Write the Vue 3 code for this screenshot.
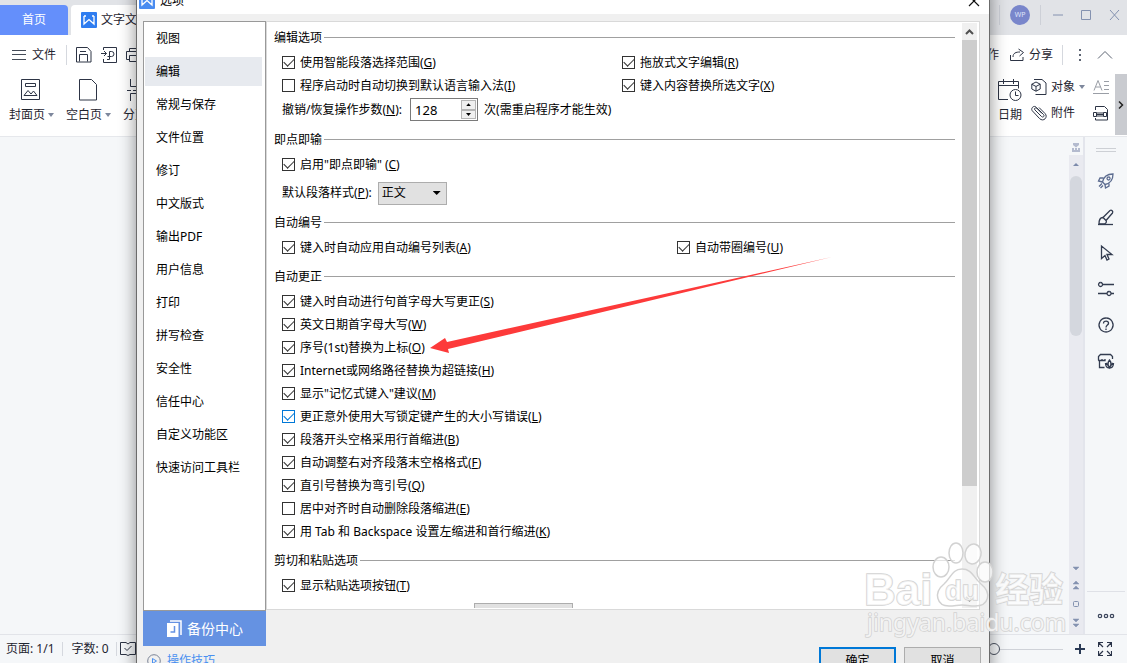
<template>
  <div class="app">
    <!-- 标签栏 -->
    <div class="tab-bar">
      <button class="tab home-tab">首页</button>
      <button class="tab doc-tab">
        <svg width="16" height="16" viewBox="0 0 16 16">
          <rect width="16" height="16" rx="1" fill="#2f7df0" />
          <path d="M3 4v8l5-4.500 5 4.500V4M3 4h2M11 4h2" fill="none" stroke="#fff" stroke-width="1.300" />
        </svg>
        <span>文字文稿1</span>
      </button>
      <div class="window-tools">
        <i class="split"></i>
        <span class="avatar">WP</span>
        <i class="split"></i>
        <svg class="win-icons" width="68" height="14" viewBox="0 0 68 14">
          <path d="M0 7h10M28.500 2.500h9v9h-9zM57 2l9 10M66 2l-9 10" fill="none" stroke="#8492b0" />
        </svg>
      </div>
    </div>

    <!-- 工具栏 -->
    <div class="toolbar">
      <div class="tool-left">
        <div class="quick-row">
          <button class="file-btn">
            <svg width="14" height="12" viewBox="0 0 14 12"><path d="M0 1.500h14M0 5.500h14M0 10.500h14" stroke="#444b57" /></svg>
            <span>文件</span>
          </button>
          <i class="split"></i>
          <svg class="line-icon" width="16" height="16" viewBox="0 0 16 16">
            <path d="M.5 .5h11l3.500 4v10.500H.5zM3.500 14.500V7.500h8v7M4 4.500h6" />
          </svg>
          <svg class="line-icon" width="16" height="16" viewBox="0 0 16 16">
            <path d="M2.500 3V.5h13v15h-13V12M0 6.500h5.500M3 4l2.500 2.500L3 9M6 12.500h2.500V4.500h2a2.500 2.500 0 0 1 0 5H6.500" />
          </svg>
          <svg class="line-icon" width="16" height="16" viewBox="0 0 16 16">
            <path d="M3.500 4V1.500h9V4M3 12.500H.5v-8h15v8H13M3.500 8.500h9v6h-9z" />
          </svg>
        </div>
        <div class="ribbon-row">
          <button class="big-btn">
            <svg class="line-icon" width="20" height="22" viewBox="0 0 20 22">
              <path d="M.5 .5h18v20H.5zM4.500 4.500h10v3h-10zM3 16.500h13l-3.500-4.500-2.500 3-3-3.500z" />
            </svg>
            <span class="caption">封面页<i class="caret"></i></span>
          </button>
          <button class="big-btn">
            <svg class="line-icon" width="20" height="22" viewBox="0 0 20 22">
              <path d="M1.500 .5h12l5 5v15.500h-17z" />
            </svg>
            <span class="caption">空白页<i class="caret"></i></span>
          </button>
          <button class="big-btn page-break">
            <svg class="line-icon" width="20" height="22" viewBox="0 0 20 22">
              <path d="M3.500 0v7.500h13V0M3.500 22v-7.500h13V22M0 11.500h4M6 11.500h3M11 11.500h3M16 11.500h4" />
            </svg>
            <span class="caption">分页<i class="caret"></i></span>
          </button>
        </div>
      </div>

      <div class="tool-right">
        <div class="quick-row">
          <span class="collab">协作</span>
          <button class="share-btn">
            <svg class="line-icon" width="15" height="14" viewBox="0 0 15 14">
              <path d="M.5 7v5.500h12.500V9M3 9c0-4 3-5 7-5M8.500 1l5 3.500-4 3.500" />
            </svg>
            <span>分享</span>
          </button>
          <i class="split"></i>
          <svg class="more" width="4" height="14" viewBox="0 0 4 14">
            <path d="M1 1h2v2H1zM1 6h2v2H1zM1 11h2v2H1z" fill="#5d6573" />
          </svg>
          <svg class="fold" width="16" height="8" viewBox="0 0 16 8"><path d="M1 7.500l7-7 7 7" fill="none" stroke="#5d6573" /></svg>
        </div>
        <div class="ribbon-row">
          <button class="big-btn date-btn">
            <svg class="line-icon" width="24" height="22" viewBox="0 0 24 22">
              <path d="M10 20.500H.5v-18h20v7M1 6.500h19M5.500 0v5M15.500 0v5" />
              <circle cx="17.500" cy="16" r="5.500" />
              <path d="M17.500 12.500v4h3" />
            </svg>
            <span class="caption">日期</span>
          </button>
          <div class="small-col">
            <button class="small-btn">
              <svg class="line-icon" width="16" height="16" viewBox="0 0 16 16">
                <path d="M3 .5h8l4 3.500v11.500H4.500M5 3L.8 5.200v4.800L5 12.200l4.200-2.200V5.200zM.8 5.200L5 7.500l4.200-2.300M5 7.500v4.700" />
              </svg>
              <span>对象</span><i class="caret"></i>
            </button>
            <button class="small-btn">
              <svg class="line-icon" width="16" height="16" viewBox="0 0 16 16">
                <path d="M4 5l6.500 6.500c1.500 1.500 3.500-.5 2-2L5.500 2.500C3-.5-1 3.500 1.500 6l7 7.500c4 4 9-1.500 5.500-5L8 2.500M4 5c-1.500-1.500.5-3 2-1.500l5 5" />
              </svg>
              <span>附件</span>
            </button>
          </div>
          <div class="small-col icon-col">
            <svg width="16" height="16" viewBox="0 0 16 16">
              <path d="M1 11.500L5 1.500l4 10M2.500 8h5M11 2.500h5M11 6.500h5M11 10.500h5M0 14.500h16" fill="none" stroke="#9a9ea6" />
            </svg>
            <svg class="line-icon" width="16" height="16" viewBox="0 0 16 16">
              <path d="M2.500 5V1.500h9l3 3v10.500h-12V13M.5 7.500h3v4h-3zM10.500 7.500h3v4h-3zM3.500 9.500h7M3.500 8h7M3.500 11h7" />
            </svg>
          </div>
          <button class="expand" aria-label="更多工具">
            <svg width="6" height="10" viewBox="0 0 6 10"><path d="M1 1.500L4.500 5 1 8.500" fill="none" stroke="#222" stroke-width="1.500" /></svg>
          </button>
        </div>
      </div>
    </div>

    <!-- 文档区 -->
    <div class="workspace">
      <div class="canvas"></div>
      <div class="doc-scroll">
        <svg class="ruler-icon" width="14" height="18" viewBox="0 0 14 18">
          <path d="M4 6h6v2L7 10.500 4 8zM3 11h2v2h1v-2h2v2h1v-2h2v4H3z" fill="#b4bbcf" />
        </svg>
        <div class="doc-track">
          <svg width="14" height="20" viewBox="0 0 14 20"><path d="M4 11l3-3 3 3z" fill="#7c8aab" /></svg>
          <div class="doc-thumb"></div>
          <svg class="doc-nav" width="14" height="72" viewBox="0 0 14 72">
            <path d="M4 5h6L7 8zM4 22l3-3 3 3zM4 27l3-3 3 3zM4 57h6l-3 3zM4 62h6l-3 3z" fill="#8492b0" stroke="#8492b0" stroke-width=".5" />
            <rect x="4.500" y="39.500" width="5" height="5" rx="1" fill="none" stroke="#8492b0" />
          </svg>
        </div>
      </div>
      <div class="side-bar">
        <i class="handle"></i>
        <button v-for="icon in sideIcons" :key="icon.name" class="side-btn" :aria-label="icon.name">
          <svg width="18" height="18" viewBox="0 0 18 18" fill="none" :stroke="icon.color" stroke-width="1.300">
            <path v-for="d in icon.paths" :key="d" :d="d" />
          </svg>
        </button>
        <div class="side-more">
          <svg width="18" height="6" viewBox="0 0 18 6" fill="none" stroke="#3b455c" stroke-width="1.200">
            <circle cx="3" cy="3" r="1.700" /><circle cx="9" cy="3" r="1.700" /><circle cx="15" cy="3" r="1.700" />
          </svg>
        </div>
      </div>
    </div>

    <!-- 状态栏 -->
    <div class="status-bar">
      <span>页面: 1/1</span>
      <i class="split"></i>
      <span>字数: 0</span>
      <i class="split"></i>
      <svg class="line-icon" width="16" height="14" viewBox="0 0 16 14">
        <path d="M6 .5H.5v12H6l2 1 2-1h5.500V.5H10L8 2 6 .5M4.500 6l2.500 2.500L11.500 4" />
      </svg>
      <div class="zoom-area">
        <input v-model="zoom" type="range" min="0" max="100" aria-label="缩放" />
        <svg width="10" height="10" viewBox="0 0 10 10"><path d="M5 0v10M0 5h10" stroke="#2a3a55" stroke-width="2" /></svg>
        <svg class="full" width="14" height="14" viewBox="0 0 14 14">
          <path d="M5 .5H.5V5M.5 .5L5 5M9 .5h4.500V5M13.500 .5L9 5M5 13.500H.5V9M.5 13.500L5 9M9 13.500h4.500V9M13.500 13.500L9 9" fill="none" stroke="#2a3348" stroke-width="1.200" />
        </svg>
      </div>
    </div>

    <!-- 选项对话框 -->
    <div class="dialog" role="dialog" aria-label="选项">
      <div class="dialog-title">
        <svg width="16" height="16" viewBox="0 0 16 16">
          <rect width="16" height="16" rx="1" fill="#4a8cf0" />
          <path d="M3 4v8l5-4.500 5 4.500V4M3 4h2M11 4h2" fill="none" stroke="#fff" stroke-width="1.300" />
        </svg>
        <span>选项</span>
        <button class="close-btn" aria-label="关闭">
          <svg width="12" height="12" viewBox="0 0 12 12"><path d="M1 1l10 10M11 1L1 11" stroke="#111" stroke-width="1.200" /></svg>
        </button>
      </div>

      <div class="dialog-body">
        <div class="left-col">
          <div class="menu">
            <button
              v-for="name in menus"
              :key="name"
              class="menu-item"
              :class="{ active: name === current }"
              @click="current = name"
            >{{ name }}</button>
          </div>
          <button class="backup-btn">
            <svg width="16" height="18" viewBox="0 0 16 18">
              <path d="M4 1h11v14" fill="none" stroke="#fff" stroke-width="1.500" />
              <path d="M1 3h11.500v14H1z" fill="#fff" />
              <path d="M8.500 6v6H4.500" fill="none" stroke="#6592e2" stroke-width="1.500" />
            </svg>
            <span>备份中心</span>
          </button>
        </div>

        <div class="panel">
          <div class="panel-content">
            <section v-for="group in groups" :key="group.title" class="group">
              <h3 class="group-title"><span>{{ group.title }}</span></h3>
              <div v-for="(row, i) in group.rows" :key="i" class="row" :class="group.layout">
                <label v-for="item in row" :key="item.key" class="check" :class="{ focus: item.focus }">
                  <input v-model="item.checked" type="checkbox" />
                  <span>{{ item.text }}(<u>{{ item.key }}</u>)</span>
                </label>
              </div>

              <div v-if="group.extra === 'undo'" class="field-row undo-row">
                <label for="undo-steps">撤销/恢复操作步数(<u>N</u>):</label>
                <div class="spinner">
                  <input id="undo-steps" v-model.number="steps" type="text" />
                  <div class="spin-btns">
                    <button aria-label="增加" @click="steps++"></button>
                    <button class="down" aria-label="减少" @click="steps--"></button>
                  </div>
                </div>
                <span>次(需重启程序才能生效)</span>
              </div>
              <div v-if="group.extra === 'style'" class="field-row style-row">
                <label for="para-style">默认段落样式(<u>P</u>):</label>
                <div class="select-box">
                  <select id="para-style">
                    <option>正文</option>
                  </select>
                </div>
              </div>
              <div v-if="group.extra === 'paste'" class="field-row paste-row">
                <div class="select-box wide">
                  <select aria-label="粘贴方式"></select>
                </div>
              </div>
            </section>
          </div>
          <div class="scrollbar">
            <svg width="15" height="17" viewBox="0 0 15 17"><path d="M4 11l3.500-3.500L11 11" fill="none" stroke="#505050" stroke-width="2" /></svg>
            <div class="track"><div class="thumb"></div></div>
            <svg width="15" height="17" viewBox="0 0 15 17"><path d="M4 6l3.500 3.500L11 6" fill="none" stroke="#505050" stroke-width="2" /></svg>
          </div>
        </div>
      </div>

      <div class="dialog-footer">
        <a href="#" class="tips">
          <svg width="14" height="14" viewBox="0 0 14 14" fill="none">
            <circle cx="7" cy="7" r="6.300" stroke="#7b8496" />
            <path d="M5.500 4.500l4 2.500-4 2.500z" stroke="#4a90f0" />
          </svg>
          <span>操作技巧</span>
        </a>
        <button class="btn primary">确定</button>
        <button class="btn">取消</button>
      </div>
    </div>

    <!-- 标注箭头 -->
    <svg class="arrow" width="404" height="98" viewBox="0 0 404 98">
      <path d="M0 92L15 82 17 86 402 1 18 93 19 97z" fill="#fd3a3a" />
    </svg>

    <!-- 水印 -->
    <svg class="watermark" width="210" height="104" viewBox="0 0 210 104">
      <g fill="#fff" fill-opacity="0.700" stroke="#d2d2d2" stroke-width="1.500">
        <ellipse cx="78" cy="30" rx="8" ry="10" />
        <ellipse cx="93" cy="16" rx="7" ry="10" />
        <ellipse cx="110" cy="17" rx="8" ry="10" transform="rotate(12 110 17)" />
        <ellipse cx="122" cy="35" rx="8" ry="10" />
        <path fill-opacity="0.400" d="M99 32c-10 0-11 9-18 15-11 9-7 22 5 22 5 0 9-1 13-1s8 1 13 1c14 0 17-13 6-22-8-7-9-15-19-15z" />
        <text class="wm-latin" x="1" y="68">Bai</text>
        <text class="wm-du" x="82" y="63">du</text>
        <text class="wm-cjk" x="132" y="65">经验</text>
        <text class="wm-url" x="4" y="94">jingyan.baidu.com</text>
      </g>
    </svg>
  </div>
</template>

<script setup>
import { ref, reactive } from 'vue'

const current = ref('编辑')
const steps = ref(128)
const zoom = ref(0)

const menus = [
  '视图', '编辑', '常规与保存', '文件位置', '修订', '中文版式', '输出PDF',
  '用户信息', '打印', '拼写检查', '安全性', '信任中心', '自定义功能区', '快速访问工具栏'
]

// 复选框条目
const check = (text, key, checked = true, focus = false) => ({ text, key, checked, focus })

const groups = reactive([
  {
    title: '编辑选项',
    layout: 'half',
    extra: 'undo',
    rows: [
      [check('使用智能段落选择范围', 'G'), check('拖放式文字编辑', 'R')],
      [check('程序启动时自动切换到默认语言输入法', 'I', false), check('键入内容替换所选文字', 'X')]
    ]
  },
  {
    title: '即点即输',
    extra: 'style',
    rows: [[check('启用"即点即输" ', 'C')]]
  },
  {
    title: '自动编号',
    layout: 'wide-first',
    rows: [[check('键入时自动应用自动编号列表', 'A'), check('自动带圈编号', 'U')]]
  },
  {
    title: '自动更正',
    rows: [
      [check('键入时自动进行句首字母大写更正', 'S')],
      [check('英文日期首字母大写', 'W')],
      [check('序号(1st)替换为上标', 'O')],
      [check('Internet或网络路径替换为超链接', 'H')],
      [check('显示"记忆式键入"建议', 'M')],
      [check('更正意外使用大写锁定键产生的大小写错误', 'L', true, true)],
      [check('段落开头空格采用行首缩进', 'B')],
      [check('自动调整右对齐段落末空格格式', 'F')],
      [check('直引号替换为弯引号', 'Q')],
      [check('居中对齐时自动删除段落缩进', 'E', false)],
      [check('用 Tab 和 Backspace 设置左缩进和首行缩进', 'K')]
    ]
  },
  {
    title: '剪切和粘贴选项',
    extra: 'paste',
    rows: [[check('显示粘贴选项按钮', 'T')]]
  }
])

// 右侧任务窗格图标
const sideIcons = [
  {
    name: '快捷',
    color: '#5c6c90',
    paths: [
      'M5.500 10c1-5 4-8 10.500-8 0 6-3 9.500-8 10.500z',
      'M6.500 6H3L1.500 9l4 1M12 11.500V14l-3.500 2-.5-3.500',
      'M11.500 5a1.500 1.500 0 1 0 .1 0M5 11.500l-3 3M6 13.500l-2.500 2.500'
    ]
  },
  {
    name: '样式',
    color: '#333c50',
    paths: ['M1 16.500h15', 'M6 9.500L13 2.500c1.500-1 3.500 1 2.500 2.500L9 12.500', 'M6 9.500c-3 0-4 2-4 6.500h4c3 0 4-2 3-3.500z']
  },
  {
    name: '选择',
    color: '#333c50',
    paths: ['M4.500 2v12.500l3.500-3 2 4.500 2-1-2-4.500h5z']
  },
  {
    name: '属性',
    color: '#333c50',
    paths: ['M5.500 4.500H17M1 13.500h9M14 13.500h3', 'M3.500 2.500a2 2 0 1 0 .1 0', 'M12 11.500a2 2 0 1 0 .1 0']
  },
  {
    name: '帮助',
    color: '#333c50',
    paths: ['M9 2a7 7 0 1 0 .1 0', 'M6.500 7.500c0-3.500 5.500-3 5 0-.3 1.500-2.500 1.800-2.500 4M9 12.500v1.500']
  },
  {
    name: '稻壳',
    color: '#333c50',
    paths: [
      'M7.500 15.500H2.500v-6L1.500 8V4.500l2-2h10l2 2V7M2 8.500h3V7v1.500h3V7',
      'M12.500 8c-2 2.500-2 5 0 8 2-3 2-5.500 0-8zM8.500 11c0 3.500 1.500 5 4 5M16.500 11c0 3.500-1.500 5-4 5M9 11l3.500 4M16 11l-3.500 4'
    ]
  }
]
</script>

<style>
body {
  margin: 0;
  overflow: hidden;
}
</style>

<style scoped>
.app {
  position: relative;
  display: flex;
  flex-direction: column;
  height: 100vh;
  overflow: hidden;
  background: #f5f7f9;
  font-family: "Noto Sans", "Noto Sans CJK SC", sans-serif;
  font-size: 12px;
  line-height: 16px;
  color: #1f2530;
}

.app * {
  box-sizing: border-box;
}

button {
  padding: 0;
  border: none;
  background: none;
  font: inherit;
  color: inherit;
}

svg {
  display: block;
  flex: none;
}

.line-icon {
  fill: none;
  stroke: #2d3445;
}

.split {
  width: 1px;
  height: 20px;
  background: #d5d8de;
}

/* 标签栏 */
.tab-bar {
  display: flex;
  align-items: flex-end;
  height: 35px;
  background: #e1e3e7;
}

.tab {
  display: flex;
  align-items: center;
  height: 30px;
}

.home-tab {
  width: 68px;
  justify-content: center;
  background: #648ffb;
  color: #fff;
  border-radius: 0 4px 0 0;
}

.doc-tab {
  width: 160px;
  margin-left: 3px;
  padding-left: 10px;
  gap: 4px;
  background: #fff;
  border-radius: 4px 4px 0 0;
}

.window-tools {
  display: flex;
  align-items: center;
  align-self: flex-start;
  height: 30px;
  margin-left: auto;
  padding-right: 6px;
  gap: 10px;
}

.window-tools .split {
  background: #cdd0d7;
}

.avatar {
  width: 20px;
  height: 20px;
  border-radius: 50%;
  background: #7986cb;
  color: #dfe3fa;
  font-size: 7px;
  line-height: 20px;
  text-align: center;
}

.win-icons {
  margin-left: 2px;
}

/* 工具栏 */
.toolbar {
  display: flex;
  justify-content: space-between;
  height: 102px;
  background: #fff;
  border-bottom: 1px solid #e6e8ec;
}

.quick-row {
  display: flex;
  align-items: center;
  height: 39px;
}

.tool-left .quick-row {
  padding-left: 12px;
  gap: 9px;
}

.file-btn,
.share-btn {
  display: flex;
  align-items: center;
  gap: 6px;
}

.file-btn {
  margin-right: 1px;
}

.ribbon-row {
  display: flex;
}

.tool-left .ribbon-row {
  padding-left: 9px;
  gap: 12px;
}

.big-btn {
  display: flex;
  flex-direction: column;
  align-items: flex-start;
  gap: 6px;
  padding-top: 5px;
}

.tool-left .big-btn .line-icon {
  margin-left: 12px;
}

.tool-left .page-break .line-icon {
  margin-left: 4px;
}

.caption {
  display: flex;
  align-items: center;
}

.caret {
  width: 6px;
  height: 4px;
  margin-left: 3px;
  background: #7d879c;
  clip-path: polygon(0 0, 100% 0, 50% 100%);
}

.tool-right .quick-row {
  padding-right: 14px;
}

.collab {
  margin-right: 11px;
}

.share-btn {
  gap: 4px;
}

.tool-right .split {
  margin: 0 15px 0 9px;
}

.fold {
  margin-left: 15px;
}

.tool-right {
  display: flex;
  flex-direction: column;
  align-items: flex-end;
}

.date-btn {
  margin-right: 9px;
}

.small-col {
  display: flex;
  flex-direction: column;
  gap: 10px;
  padding-top: 5px;
}

.small-btn {
  display: flex;
  align-items: center;
  gap: 4px;
}

.small-btn .caret {
  margin-left: 0;
}

.icon-col {
  margin: 0 6px 0 8px;
}

.expand {
  display: flex;
  align-items: center;
  justify-content: center;
  width: 12px;
  height: 61px;
  background: #c9cbd0;
}

/* 文档区 */
.workspace {
  display: flex;
  flex: 1;
  min-height: 0;
}

.canvas {
  flex: 1;
}

.doc-scroll {
  display: flex;
  flex-direction: column;
  width: 16px;
  border-right: 2px solid #e3e5ec;
}

.doc-track {
  display: flex;
  flex: 1;
  flex-direction: column;
  background: #e9eaf0;
}

.doc-thumb {
  height: 160px;
  margin: 1px;
  border-radius: 6px;
  background: #d4d7de;
}

.doc-nav {
  margin-top: auto;
}

.side-bar {
  display: flex;
  flex-direction: column;
  align-items: center;
  width: 42px;
}

.handle {
  width: 20px;
  height: 4px;
  margin: 11px 0;
  border: solid #cdd0d5;
  border-width: 1px 0;
}

.side-btn {
  display: flex;
  align-items: center;
  justify-content: center;
  width: 36px;
  height: 36px;
}

.side-more {
  display: flex;
  align-items: center;
  justify-content: center;
  width: 38px;
  height: 43px;
  padding-top: 6px;
  margin-top: auto;
  border-top: 1px solid #dfe1e7;
}

/* 状态栏 */
.status-bar {
  display: flex;
  align-items: center;
  height: 29px;
  padding: 0 15px 0 6px;
  border-top: 1px solid #e2e4e9;
}

.status-bar .split {
  height: 14px;
  margin: 0 9px 0 7px;
}

.status-bar .split + .line-icon {
  margin-left: -6px;
}

.zoom-area {
  display: flex;
  align-items: center;
  margin-left: auto;
}

.zoom-area input {
  appearance: none;
  width: 75px;
  height: 12px;
  margin: 0 12px 0 0;
  background: linear-gradient(#cfd2d8, #cfd2d8) center / 100% 1px no-repeat;
}

.zoom-area input::-webkit-slider-thumb {
  appearance: none;
  width: 12px;
  height: 12px;
  border: 1px solid #4a5160;
  border-radius: 50%;
  background: #f5f7f9;
}

.full {
  margin-left: 13px;
}

/* 对话框 */
.dialog {
  position: absolute;
  top: -14px;
  bottom: -13px;
  left: 136px;
  right: 137px;
  display: flex;
  flex-direction: column;
  background: #f0f0f0;
  border: solid #6b6b6b;
  border-width: 0 1px;
  box-shadow: 0 0 16px rgba(0, 0, 0, 0.45);
  color: #000;
}

.dialog-title {
  display: flex;
  align-items: center;
  height: 28px;
  padding: 2px 9px 0 2px;
  gap: 5px;
  background: #fff;
}

.close-btn {
  margin-left: auto;
}

.dialog-body {
  display: flex;
  flex: 1;
  min-height: 0;
  padding: 7px 9px 0 6px;
}

.left-col {
  display: flex;
  flex-direction: column;
  width: 123px;
}

.menu {
  display: flex;
  flex: 1;
  flex-direction: column;
  gap: 4px;
  padding: 2px 3px 0 1px;
  background: #fff;
  border: 1px solid #999;
}

.menu-item {
  height: 29px;
  padding-left: 11px;
  text-align: left;
}

.menu-item.active {
  background: #e7eaef;
}

.backup-btn {
  display: flex;
  align-items: center;
  justify-content: center;
  height: 35px;
  gap: 5px;
  background: #6592e2;
  color: #fff;
  font-size: 14px;
}

.panel {
  display: flex;
  flex: 1;
  min-width: 0;
  margin-bottom: 36px;
  padding: 1px 2px 1px 0;
  background: #fff;
  border: 1px solid #d9d9d9;
}

.panel-content {
  flex: 1;
  min-width: 0;
  padding: 6px 7px 0;
  overflow: hidden;
}

.group {
  margin-bottom: 9px;
}

.group-title {
  display: flex;
  align-items: center;
  height: 18px;
  margin: 0 0 4px;
  gap: 2px;
  font-size: 12px;
  font-weight: 400;
}

.group-title::after {
  content: "";
  flex: 1;
  height: 1px;
  margin-bottom: 1px;
  background: #a0a0a0;
}

.row {
  display: grid;
  padding-left: 8px;
}

.row.half {
  grid-template-columns: 340px 1fr;
}

.row.wide-first {
  grid-template-columns: 395px 1fr;
}

.check {
  display: flex;
  align-items: center;
  height: 23px;
  gap: 5px;
}

.check span {
  white-space: pre;
}

.check input {
  appearance: none;
  display: flex;
  justify-content: center;
  flex: none;
  width: 13px;
  height: 13px;
  margin: 0;
  border: 1px solid #333;
  background: #fff;
  color: #333;
}

.check input:checked::before {
  content: "";
  width: 9px;
  height: 5px;
  margin-top: 1px;
  border: solid currentColor;
  border-width: 0 0 1px 1px;
  transform: rotate(-45deg);
}

.check.focus input {
  border-color: #0078d7;
  color: #0078d7;
}

.field-row {
  display: flex;
  align-items: center;
  padding-left: 8px;
}

.undo-row {
  height: 25px;
  gap: 6px;
}

.undo-row label {
  margin-right: 2px;
}

.style-row {
  height: 24px;
  margin-top: 5px;
  gap: 6px;
}

.paste-row {
  height: 24px;
  margin-top: 5px;
  padding-left: 200px;
}

.spinner {
  display: flex;
  width: 68px;
  height: 23px;
  padding: 1px;
  border: 1px solid #7a7a7a;
}

.spinner input {
  flex: 1;
  min-width: 0;
  padding: 0 3px;
  border: none;
  outline: none;
  font: inherit;
  font-size: 13px;
}

.spin-btns {
  display: flex;
  flex-direction: column;
  width: 15px;
}

.spin-btns button {
  display: flex;
  flex: 1;
  align-items: center;
  justify-content: center;
  background: #f0f0f0;
  border: 1px solid #b5b5b5;
}

.spin-btns button::before {
  content: "";
  width: 5px;
  height: 3px;
  background: #000;
  clip-path: polygon(50% 0, 100% 100%, 0 100%);
}

.spin-btns .down::before {
  transform: rotate(180deg);
}

.select-box {
  display: flex;
  align-items: center;
  width: 69px;
  height: 23px;
  padding-right: 5px;
  background: #e1e1e1;
  border: 1px solid #adadad;
}

.select-box::after {
  content: "";
  width: 8px;
  height: 4px;
  background: #000;
  clip-path: polygon(0 0, 100% 0, 50% 100%);
}

.select-box.wide {
  width: 99px;
}

.select-box.wide::after {
  display: none;
}

.select-box select {
  appearance: none;
  flex: 1;
  min-width: 0;
  height: 21px;
  padding: 0 3px;
  border: none;
  background: none;
  font: inherit;
  color: inherit;
}

.scrollbar {
  display: flex;
  flex-direction: column;
  width: 15px;
  background: #f0f0f0;
}

.track {
  flex: 1;
}

.thumb {
  height: 81%;
  background: #cdcdcd;
}

.dialog-footer {
  display: flex;
  align-items: center;
  height: 30px;
  padding: 0 8px 0 10px;
  gap: 8px;
}

.tips {
  display: flex;
  align-items: center;
  margin-right: auto;
  gap: 6px;
  color: #4a90f0;
  text-decoration: none;
}

.btn {
  width: 77px;
  height: 28px;
  background: #e1e1e1;
  border: 1px solid #adadad;
}

.btn.primary {
  border: 2px solid #0078d7;
}

/* 标注箭头与水印 */
.arrow {
  position: absolute;
  top: 256px;
  left: 430px;
  pointer-events: none;
}

.watermark {
  position: absolute;
  right: 54px;
  bottom: 22px;
  pointer-events: none;
}

.watermark text {
  paint-order: stroke;
}

.wm-latin {
  font-family: "Liberation Sans", sans-serif;
  font-size: 44px;
  font-weight: 700;
}

.wm-du {
  font-family: "Liberation Sans", sans-serif;
  font-size: 28px;
  font-weight: 700;
}

.wm-cjk {
  font-family: "Noto Sans CJK SC", sans-serif;
  font-size: 34px;
  font-weight: 700;
}

.wm-url {
  font-family: "Noto Sans", sans-serif;
  font-size: 23px;
}
</style>
